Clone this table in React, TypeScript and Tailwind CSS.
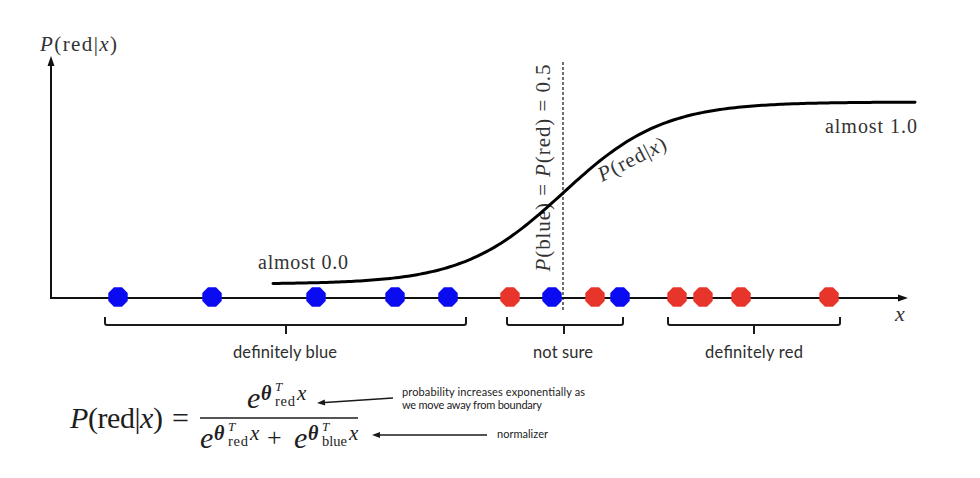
const BLUE = "#0b0bf2";
const RED = "#e8352b";

const blueDots = [118, 212, 316, 395, 448, 552, 620];
const redDots = [510, 595, 677, 703, 741, 829];

// regular octagon with a flat top, like the markers in the slide
const octagon = (cx: number, cy: number, r: number) =>
  Array.from({ length: 8 }, (_, i) => {
    const a = ((22.5 + i * 45) * Math.PI) / 180;
    return `${(cx + r * Math.cos(a)).toFixed(2)},${(cy + r * Math.sin(a)).toFixed(2)}`;
  }).join(" ");

// logistic curve from "almost 0.0" up to "almost 1.0"
const sigmoidPath = () => {
  const pts: string[] = [];
  for (let x = 273; x <= 915; x += 3) {
    const y = 284 - 182 / (1 + Math.exp(-(x - 563) / 50));
    pts.push(`${pts.length ? "L" : "M"}${x},${y.toFixed(2)}`);
  }
  return pts.join(" ");
};

const Brace = ({ x1, x2, mid }: { x1: number; x2: number; mid: number }) => (
  <path
    d={`M${x1},317 L${x1},323 Q${x1},325 ${x1 + 2},325 L${x2 - 2},325 Q${x2},325 ${x2},323 L${x2},317 M${mid},325 L${mid},334`}
    fill="none"
    stroke="#1a1a1a"
    strokeWidth={2}
  />
);

const Arrow = ({ x1, y1, x2, y2 }: { x1: number; y1: number; x2: number; y2: number }) => {
  const a = Math.atan2(y2 - y1, x2 - x1);
  const len = 8;
  const w = 3;
  const bx = x2 - len * Math.cos(a);
  const by = y2 - len * Math.sin(a);
  const px = -Math.sin(a) * w;
  const py = Math.cos(a) * w;
  return (
    <g>
      <line x1={x1} y1={y1} x2={bx} y2={by} stroke="#1a1a1a" strokeWidth={1.4} />
      <polygon points={`${x2},${y2} ${bx + px},${by + py} ${bx - px},${by - py}`} fill="#1a1a1a" />
    </g>
  );
};

// e^{θ^T_sub x}
const ExpTerm = ({ x, y, sub, subLen }: { x: number; y: number; sub: string; subLen: number }) => (
  <g fill="#1e1e1e">
    <text x={x} y={y} fontSize={30} fontStyle="italic">e</text>
    <text x={x + 14} y={y - 8} fontSize={20} fontStyle="italic" fontWeight="bold">θ</text>
    <text x={x + 28} y={y - 17} fontSize={13} fontStyle="italic">T</text>
    <text x={x + 28} y={y - 2} fontSize={14.5} textLength={subLen} lengthAdjust="spacing">{sub}</text>
    <text x={x + 30 + subLen} y={y - 8} fontSize={21} fontStyle="italic">x</text>
  </g>
);

export default function App() {
  return (
    <div className="w-[980px] h-[478px] bg-white overflow-hidden">
      <svg
        width={980}
        height={478}
        viewBox="0 0 980 478"
        className="block font-['Liberation_Serif','DejaVu_Serif',serif]"
      >
        {/* axes */}
        <line x1={51} y1={298} x2={51} y2={64} stroke="#111" strokeWidth={2} />
        <polygon points="51,56 47.5,66 54.5,66" fill="#111" />
        <line x1={50} y1={298} x2={898} y2={298} stroke="#111" strokeWidth={2} />
        <polygon points="908,298 898,294.5 898,301.5" fill="#111" />

        <text x={40} y={51} fontSize={21} fill="#333" textLength={77} lengthAdjust="spacing">
          <tspan fontStyle="italic">P</tspan>(red|<tspan fontStyle="italic">x</tspan>)
        </text>
        <text x={895} y={321} fontSize={22} fontStyle="italic" fill="#333">x</text>

        {/* decision boundary */}
        <line x1={563} y1={62} x2={563} y2={310} stroke="#111" strokeWidth={1.2} strokeDasharray="3 2" />
        <text
          x={550}
          y={168}
          fontSize={21}
          fill="#333"
          textAnchor="middle"
          textLength={207}
          lengthAdjust="spacing"
          transform="rotate(-90 550 168)"
        >
          <tspan fontStyle="italic">P</tspan>(blue) = <tspan fontStyle="italic">P</tspan>(red) = 0.5
        </text>

        {/* curve */}
        <path d={sigmoidPath()} fill="none" stroke="#000" strokeWidth={3} strokeLinecap="round" />
        <text x={602} y={182} fontSize={21} fill="#333" textLength={74} lengthAdjust="spacing" transform="rotate(-27 602 182)">
          <tspan fontStyle="italic">P</tspan>(red|<tspan fontStyle="italic">x</tspan>)
        </text>
        <text x={258} y={269} fontSize={20} fill="#333" textLength={90} lengthAdjust="spacing">almost 0.0</text>
        <text x={825} y={133} fontSize={20} fill="#333" textLength={92} lengthAdjust="spacing">almost 1.0</text>

        {/* data points */}
        {blueDots.map((x) => (
          <polygon key={`b${x}`} points={octagon(x, 297, 10.5)} fill={BLUE} />
        ))}
        {redDots.map((x) => (
          <polygon key={`r${x}`} points={octagon(x, 297, 10.5)} fill={RED} />
        ))}

        {/* groups */}
        <Brace x1={105} x2={466} mid={286} />
        <Brace x1={507} x2={623} mid={564} />
        <Brace x1={668} x2={840} mid={754} />
        <g className="font-['Lato','Open_Sans',sans-serif]" fontSize={16.5} fill="#2e2e2e" textAnchor="middle">
          <text x={285} y={358} textLength={104} lengthAdjust="spacing">definitely blue</text>
          <text x={563} y={358} textLength={60} lengthAdjust="spacing">not sure</text>
          <text x={754} y={358} textLength={98} lengthAdjust="spacing">definitely red</text>
        </g>

        {/* formula */}
        <text x={70} y={428} fontSize={30} fill="#1e1e1e" textLength={93} lengthAdjust="spacing">
          <tspan fontStyle="italic">P</tspan>(red|<tspan fontStyle="italic">x</tspan>)
        </text>
        <text x={172} y={428} fontSize={30} fill="#1e1e1e">=</text>
        <ExpTerm x={247} y={408} sub="red" subLen={20} />
        <line x1={200} y1={418} x2={358} y2={418} stroke="#1e1e1e" strokeWidth={1.5} />
        <ExpTerm x={200} y={448} sub="red" subLen={20} />
        <text x={267} y={446} fontSize={26} fill="#1e1e1e">+</text>
        <ExpTerm x={294} y={448} sub="blue" subLen={25} />

        <Arrow x1={393} y1={398} x2={317} y2={403} />
        <Arrow x1={487} y1={435} x2={372} y2={435} />
        <g className="font-['Lato','Open_Sans',sans-serif]" fontSize={11} fill="#222">
          <text x={402} y={396} textLength={183} lengthAdjust="spacing">probability increases exponentially as</text>
          <text x={402} y={409} textLength={140} lengthAdjust="spacing">we move away from boundary</text>
          <text x={497} y={438} textLength={51} lengthAdjust="spacing">normalizer</text>
        </g>
      </svg>
    </div>
  );
}
